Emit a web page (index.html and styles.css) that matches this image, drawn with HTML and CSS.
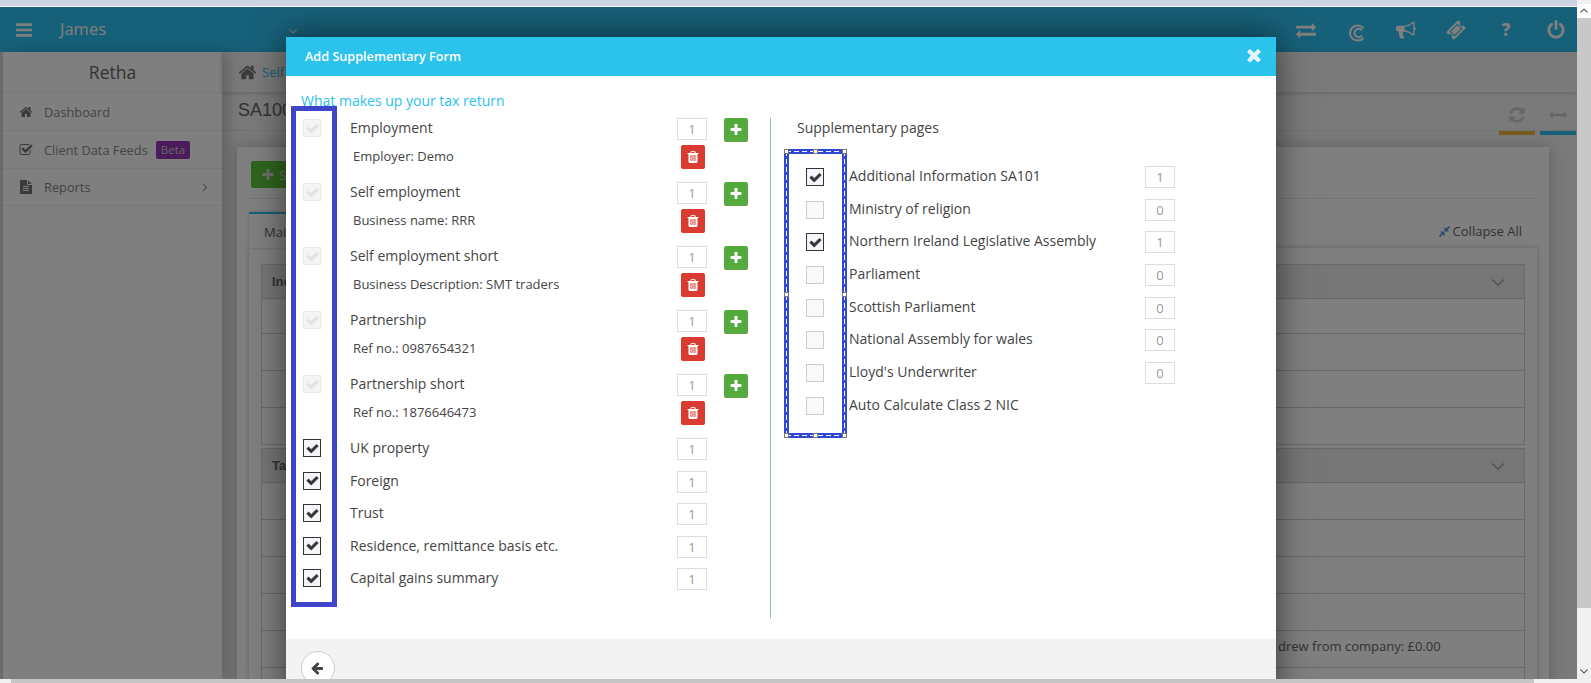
FILE: index.html
```html
<!DOCTYPE html>
<html lang="en">
<head>
<meta charset="utf-8">
<title>Add Supplementary Form</title>
<link rel="stylesheet" href="styles.css">
</head>
<body>
<svg class="sprite" aria-hidden="true">
  <symbol id="i-check" viewBox="0 0 1792 1792"><path d="M1671 566q0 40-28 68l-724 724-136 136q-28 28-68 28t-68-28l-136-136-362-362q-28-28-28-68t28-68l136-136q28-28 68-28t68 28l294 295 656-657q28-28 68-28t68 28l136 136q28 28 28 68z"/></symbol>
  <symbol id="i-plus" viewBox="0 0 1792 1792"><path d="M1600 736v192q0 40-28 68t-68 28h-416v416q0 40-28 68t-68 28h-192q-40 0-68-28t-28-68v-416h-416q-40 0-68-28t-28-68v-192q0-40 28-68t68-28h416v-416q0-40 28-68t68-28h192q40 0 68 28t28 68v416h416q40 0 68 28t28 68z"/></symbol>
  <symbol id="i-times" viewBox="0 0 1792 1792"><path d="M1490 1322q0 40-28 68l-136 136q-28 28-68 28t-68-28l-294-294-294 294q-28 28-68 28t-68-28l-136-136q-28-28-28-68t28-68l294-294-294-294q-28-28-28-68t28-68l136-136q28-28 68-28t68 28l294 294 294-294q28-28 68-28t68 28l136 136q28 28 28 68t-28 68l-294 294 294 294q28 28 28 68z"/></symbol>
  <symbol id="i-trash" viewBox="0 0 1792 1792"><path d="M704 1376v-704q0-14-9-23t-23-9h-64q-14 0-23 9t-9 23v704q0 14 9 23t23 9h64q14 0 23-9t9-23zm256 0v-704q0-14-9-23t-23-9h-64q-14 0-23 9t-9 23v704q0 14 9 23t23 9h64q14 0 23-9t9-23zm256 0v-704q0-14-9-23t-23-9h-64q-14 0-23 9t-9 23v704q0 14 9 23t23 9h64q14 0 23-9t9-23zm-544-992h448l-48-117q-7-9-17-11h-317q-10 2-17 11zm928 32v64q0 14-9 23t-23 9h-96v948q0 83-47 143.5t-113 60.5h-832q-66 0-113-58.5t-47-141.5v-952h-96q-14 0-23-9t-9-23v-64q0-14 9-23t23-9h309l70-167q15-37 54-63t79-26h320q40 0 79 26t54 63l70 167h309q14 0 23 9t9 23z"/></symbol>
  <symbol id="i-home" viewBox="0 0 1792 1792"><path d="M1472 992v480q0 26-19 45t-45 19h-384v-384h-256v384h-384q-26 0-45-19t-19-45v-480q0-1 .5-3t.5-3l575-474 575 474q1 2 1 6zm223-69l-62 74q-8 9-21 11h-3q-13 0-21-7l-692-577-692 577q-12 8-24 7-13-2-21-11l-62-74q-8-10-7-23.5t11-21.5l719-599q32-26 76-26t76 26l244 204v-195q0-14 9-23t23-9h192q14 0 23 9t9 23v408l219 182q10 8 11 21.5t-7 23.5z"/></symbol>
  <symbol id="i-back" viewBox="0 0 1792 1792"><path d="M1536 896v128q0 53-32.5 90.5t-84.5 37.5h-704l293 294q38 36 38 90t-38 90l-75 76q-37 37-90 37-52 0-91-37l-651-652q-37-37-37-90 0-52 37-91l651-650q38-38 91-38 52 0 90 38l75 74q38 38 38 91t-38 91l-293 293h704q52 0 84.5 37.5t32.5 90.5z"/></symbol>
  <symbol id="i-power" viewBox="0 0 1792 1792"><path d="M1664 896q0 156-61 298t-164 245-245 164-298 61-298-61-245-164-164-245-61-298q0-182 80.5-343t226.5-270q43-32 95.5-25t83.5 50q32 42 24.5 94.5t-49.5 84.5q-98 74-151.5 181t-53.5 228q0 104 40.5 198.5t109.5 163.5 163.5 109.5 198.5 40.5 198.5-40.5 163.5-109.5 109.5-163.5 40.5-198.5q0-121-53.5-228t-151.5-181q-42-32-49.5-84.5t24.5-94.5q31-43 84-50t95 25q146 109 226.5 270t80.5 343zm-640-768v640q0 52-38 90t-90 38-90-38-38-90v-640q0-52 38-90t90-38 90 38 38 90z"/></symbol>
  <symbol id="i-exchange" viewBox="0 0 1792 1792"><path d="M1792 1184v192q0 13-9.5 22.5t-22.5 9.5h-1376v192q0 13-9.5 22.5t-22.5 9.5q-12 0-24-10l-319-320q-9-9-9-22 0-14 9-23l320-320q9-9 23-9 13 0 22.5 9.5t9.5 22.5v192h1376q13 0 22.5 9.5t9.5 22.5zm0-544q0 14-9 23l-320 320q-9 9-23 9-13 0-22.5-9.5t-9.5-22.5v-192h-1376q-13 0-22.5-9.5t-9.5-22.5v-192q0-13 9.5-22.5t22.5-9.5h1376v-192q0-14 9-23t23-9q12 0 24 10l319 319q9 9 9 23z"/></symbol>
  <symbol id="i-bullhorn" viewBox="0 0 1792 1792"><path d="M1664 640q53 0 90.5 37.5t37.5 90.5-37.5 90.5-90.5 37.5v384q0 52-38 90t-90 38q-417-347-812-380-58 19-91 66t-31 100.5 40 92.5q-20 33-23 65.5t6 58 33.5 55 48 50 61.5 50.5q-29 58-111.5 83t-168.5 11.5-132-55.5q-7-23-29.5-87.5t-32-94.5-23-89-15-101 3.5-98.5 22-110.5h-122q-66 0-113-47t-47-113v-192q0-66 47-113t113-47h480q435 0 896-384 52 0 90 38t38 90v384zm-128 604v-954q-394 302-768 343v270q377 42 768 341z"/></symbol>
  <symbol id="i-ticket" viewBox="0 0 1792 1792"><path d="M1024 452l316 316-572 572-316-316zm-211 979l618-618q19-19 19-45t-19-45l-362-362q-18-18-45-18t-45 18l-618 618q-19 19-19 45t19 45l362 362q18 18 45 18t45-18zm889-637l-907 908q-37 37-90.5 37t-90.5-37l-126-126q56-56 56-136t-56-136-136-56-136 56l-125-126q-37-37-37-90.5t37-90.5l907-906q37-37 90.5-37t90.5 37l125 125q-56 56-56 136t56 136 136 56 136-56l126 125q37 37 37 90.5t-37 90.5z"/></symbol>
  <symbol id="i-refresh" viewBox="0 0 1792 1792"><path d="M1639 1056q0 5-1 7-64 268-268 434.5t-478 166.5q-146 0-282.5-55t-243.5-157l-129 129q-19 19-45 19t-45-19-19-45v-448q0-26 19-45t45-19h448q26 0 45 19t19 45-19 45l-137 137q71 66 161 102t187 36q134 0 250-65t186-179q11-17 53-117 8-23 30-23h192q13 0 22.5 9.5t9.5 22.5zm25-800v448q0 26-19 45t-45 19h-448q-26 0-45-19t-19-45 19-45l138-138q-148-137-349-137-134 0-250 65t-186 179q-11 17-53 117-8 23-30 23h-199q-13 0-22.5-9.5t-9.5-22.5v-7q65-268 270-434.5t480-166.5q146 0 284 55.5t245 156.5l130-129q19-19 45-19t45 19 19 45z"/></symbol>
  <symbol id="i-arrows-h" viewBox="0 0 1792 1792"><path d="M1792 896q0 26-19 45l-256 256q-19 19-45 19t-45-19-19-45v-128h-1024v128q0 26-19 45t-45 19-45-19l-256-256q-19-19-19-45t19-45l256-256q19-19 45-19t45 19 19 45v128h1024v-128q0-26 19-45t45-19 45 19l256 256q19 19 19 45z"/></symbol>
  <symbol id="i-compress" viewBox="0 0 1792 1792"><path d="M896 960v448q0 26-19 45t-45 19-45-19l-144-144-332 332q-10 10-23 10t-23-10l-114-114q-10-10-10-23t10-23l332-332-144-144q-19-19-19-45t19-45 45-19h448q26 0 45 19t19 45zm755-672q0 13-10 23l-332 332 144 144q19 19 19 45t-19 45-45 19h-448q-26 0-45-19t-19-45v-448q0-26 19-45t45-19 45 19l144 144 332-332q10-10 23-10t23 10l114 114q10 10 10 23z"/></symbol>
  <symbol id="i-file" viewBox="0 0 1792 1792"><path d="M1596 476q14 14 28 36h-472v-472q22 14 36 28zm-476 164h544v1056q0 40-28 68t-68 28h-1344q-40 0-68-28t-28-68v-1600q0-40 28-68t68-28h800v544q0 40 28 68t68 28zm160 736v-64q0-14-9-23t-23-9h-704q-14 0-23 9t-9 23v64q0 14 9 23t23 9h704q14 0 23-9t9-23zm0-256v-64q0-14-9-23t-23-9h-704q-14 0-23 9t-9 23v64q0 14 9 23t23 9h704q14 0 23-9t9-23zm0-256v-64q0-14-9-23t-23-9h-704q-14 0-23 9t-9 23v64q0 14 9 23t23 9h704q14 0 23-9t9-23z"/></symbol>
  <symbol id="i-check-square" viewBox="0 0 1792 1792"><path d="M1472 930v318q0 119-84.5 203.5t-203.5 84.5h-832q-119 0-203.5-84.5t-84.5-203.5v-832q0-119 84.5-203.5t203.5-84.5h832q63 0 117 25 15 7 18 23 3 17-9 29l-49 49q-10 10-23 10-3 0-9-2-23-6-45-6h-832q-66 0-113 47t-47 113v832q0 66 47 113t113 47h832q66 0 113-47t47-113v-254q0-13 9-22l64-64q10-10 23-10 6 0 12 3 20 8 20 29zm231-489l-814 814q-24 24-57 24t-57-24l-430-430q-24-24-24-57t24-57l110-110q24-24 57-24t57 24l263 263 647-647q24-24 57-24t57 24l110 110q24 24 24 57t-24 57z"/></symbol>
  <symbol id="i-angle-right" viewBox="0 0 1792 1792"><path d="M1171 960q0 13-10 23l-466 466q-10 10-23 10t-23-10l-50-50q-10-10-10-23t10-23l393-393-393-393q-10-10-10-23t10-23l50-50q10-10 23-10t23 10l466 466q10 10 10 23z"/></symbol>
  <symbol id="i-angle-down" viewBox="0 0 1792 1792"><path d="M1395 736q0 13-10 23l-466 466q-10 10-23 10t-23-10l-466-466q-10-10-10-23t10-23l50-50q10-10 23-10t23 10l393 393 393-393q10-10 23-10t23 10l50 50q10 10 10 23z"/></symbol>
  <symbol id="i-bars" viewBox="0 0 1536 1280"><path d="M1536 1088v128q0 26-19 45t-45 19h-1408q-26 0-45-19t-19-45v-128q0-26 19-45t45-19h1408q26 0 45 19t19 45zm0-512v128q0 26-19 45t-45 19h-1408q-26 0-45-19t-19-45v-128q0-26 19-45t45-19h1408q26 0 45 19t19 45zm0-512v128q0 26-19 45t-45 19h-1408q-26 0-45-19t-19-45v-128q0-26 19-45t45-19h1408q26 0 45 19t19 45z"/></symbol>
  <symbol id="i-credit" viewBox="0 0 20 20"><path d="M15.5 5.2A7.6 7.6 0 1 0 15.5 14.8" fill="none" stroke="currentColor" stroke-width="2"/><path d="M14 7.4A4.2 4.2 0 1 0 14 12.6" fill="none" stroke="currentColor" stroke-width="2"/></symbol>
</svg>

<div class="window">
  <div class="browser-area">
    <div class="strip"></div>
    <div class="viewport">
      <header class="topbar">
        <svg class="ic-bars"><use href="#i-bars"/></svg>
        <span class="brand">James</span>
        <svg class="ic-caret"><use href="#i-angle-down"/></svg>
        <nav class="top-icons">
          <svg class="ic-top"><use href="#i-exchange"/></svg>
          <svg class="ic-top ic-credit"><use href="#i-credit"/></svg>
          <svg class="ic-top"><use href="#i-bullhorn"/></svg>
          <svg class="ic-top"><use href="#i-ticket"/></svg>
          <span class="ic-top ic-help">?</span>
          <svg class="ic-top"><use href="#i-power"/></svg>
        </nav>
      </header>

      <div class="layout">
        <aside class="sidebar">
          <div class="side-user">Retha</div>
          <a class="side-item"><svg class="side-ic"><use href="#i-home"/></svg>Dashboard</a>
          <a class="side-item"><svg class="side-ic"><use href="#i-check-square"/></svg>Client Data Feeds<span class="badge">Beta</span></a>
          <a class="side-item"><svg class="side-ic"><use href="#i-file"/></svg>Reports<svg class="side-more"><use href="#i-angle-right"/></svg></a>
        </aside>

        <main class="main">
          <div class="crumbs"><svg class="crumb-home"><use href="#i-home"/></svg><a class="crumb-link">Self</a></div>
          <div class="titlebar">
            <h1 class="page-title">SA100</h1>
            <div class="stat stat-amber"><svg class="stat-ic"><use href="#i-refresh"/></svg></div>
            <div class="stat stat-teal"><svg class="stat-ic"><use href="#i-arrows-h"/></svg></div>
          </div>
          <section class="card">
            <button class="btn-add"><svg class="btn-ic"><use href="#i-plus"/></svg>Supplementary</button>
            <div class="tabs">
              <div class="tab">Main</div>
              <a class="collapse"><svg class="collapse-ic"><use href="#i-compress"/></svg>Collapse All</a>
            </div>
            <div class="tab-panel">
              <div class="acc">
                <div class="acc-head">Income<svg class="acc-chev"><use href="#i-angle-down"/></svg></div>
                <div class="acc-row acc-row-first"></div>
                <div class="acc-row"></div>
                <div class="acc-row"></div>
                <div class="acc-row"></div>
              </div>
              <div class="acc">
                <div class="acc-head">Tax<svg class="acc-chev"><use href="#i-angle-down"/></svg></div>
                <div class="acc-row"></div>
                <div class="acc-row"></div>
                <div class="acc-row"></div>
                <div class="acc-row"></div>
                <div class="acc-row acc-note">drew from company: £0.00</div>
                <div class="acc-row acc-note acc-note-next">for the</div>
              </div>
            </div>
          </section>
        </main>
      </div>

      <div class="backdrop"></div>

      <div class="modal">
        <div class="modal-head">
          <span class="modal-title">Add Supplementary Form</span>
          <svg class="modal-close"><use href="#i-times"/></svg>
        </div>
        <div class="modal-body">
          <div class="col-main">
            <a class="section-link">What makes up your tax return</a>
            <div class="form-grid">
              <span class="cb cb-locked"><svg class="cb-tick"><use href="#i-check"/></svg></span>
              <span class="lbl">Employment</span>
              <input class="num" value="1" readonly>
              <span class="btn-sq btn-green"><svg class="sq-ic"><use href="#i-plus"/></svg></span>
              <span class="sub">Employer: Demo</span>
              <span class="btn-sq btn-red"><svg class="sq-ic"><use href="#i-trash"/></svg></span>

              <span class="cb cb-locked"><svg class="cb-tick"><use href="#i-check"/></svg></span>
              <span class="lbl">Self employment</span>
              <input class="num" value="1" readonly>
              <span class="btn-sq btn-green"><svg class="sq-ic"><use href="#i-plus"/></svg></span>
              <span class="sub">Business name: RRR</span>
              <span class="btn-sq btn-red"><svg class="sq-ic"><use href="#i-trash"/></svg></span>

              <span class="cb cb-locked"><svg class="cb-tick"><use href="#i-check"/></svg></span>
              <span class="lbl">Self employment short</span>
              <input class="num" value="1" readonly>
              <span class="btn-sq btn-green"><svg class="sq-ic"><use href="#i-plus"/></svg></span>
              <span class="sub">Business Description: SMT traders</span>
              <span class="btn-sq btn-red"><svg class="sq-ic"><use href="#i-trash"/></svg></span>

              <span class="cb cb-locked"><svg class="cb-tick"><use href="#i-check"/></svg></span>
              <span class="lbl">Partnership</span>
              <input class="num" value="1" readonly>
              <span class="btn-sq btn-green"><svg class="sq-ic"><use href="#i-plus"/></svg></span>
              <span class="sub">Ref no.: 0987654321</span>
              <span class="btn-sq btn-red"><svg class="sq-ic"><use href="#i-trash"/></svg></span>

              <span class="cb cb-locked"><svg class="cb-tick"><use href="#i-check"/></svg></span>
              <span class="lbl">Partnership short</span>
              <input class="num" value="1" readonly>
              <span class="btn-sq btn-green"><svg class="sq-ic"><use href="#i-plus"/></svg></span>
              <span class="sub">Ref no.: 1876646473</span>
              <span class="btn-sq btn-red"><svg class="sq-ic"><use href="#i-trash"/></svg></span>

              <span class="cb cb-on"><svg class="cb-tick"><use href="#i-check"/></svg></span>
              <span class="lbl">UK property</span>
              <input class="num" value="1" readonly>

              <span class="cb cb-on"><svg class="cb-tick"><use href="#i-check"/></svg></span>
              <span class="lbl">Foreign</span>
              <input class="num" value="1" readonly>

              <span class="cb cb-on"><svg class="cb-tick"><use href="#i-check"/></svg></span>
              <span class="lbl">Trust</span>
              <input class="num" value="1" readonly>

              <span class="cb cb-on"><svg class="cb-tick"><use href="#i-check"/></svg></span>
              <span class="lbl">Residence, remittance basis etc.</span>
              <input class="num" value="1" readonly>

              <span class="cb cb-on"><svg class="cb-tick"><use href="#i-check"/></svg></span>
              <span class="lbl">Capital gains summary</span>
              <input class="num" value="1" readonly>
            </div>
          </div>

          <div class="col-side">
            <div class="side-title">Supplementary pages</div>
            <div class="supp-grid">
              <span class="cb cb-on"><svg class="cb-tick"><use href="#i-check"/></svg></span>
              <span class="supp-lbl">Additional Information SA101</span>
              <input class="num" value="1" readonly>
              <span class="cb cb-off"></span>
              <span class="supp-lbl">Ministry of religion</span>
              <input class="num" value="0" readonly>
              <span class="cb cb-on"><svg class="cb-tick"><use href="#i-check"/></svg></span>
              <span class="supp-lbl">Northern Ireland Legislative Assembly</span>
              <input class="num" value="1" readonly>
              <span class="cb cb-off"></span>
              <span class="supp-lbl">Parliament</span>
              <input class="num" value="0" readonly>
              <span class="cb cb-off"></span>
              <span class="supp-lbl">Scottish Parliament</span>
              <input class="num" value="0" readonly>
              <span class="cb cb-off"></span>
              <span class="supp-lbl">National Assembly for wales</span>
              <input class="num" value="0" readonly>
              <span class="cb cb-off"></span>
              <span class="supp-lbl">Lloyd's Underwriter</span>
              <input class="num" value="0" readonly>
              <span class="cb cb-off"></span>
              <span class="supp-lbl">Auto Calculate Class 2 NIC</span>
            </div>
          </div>
        </div>
        <div class="modal-foot">
          <span class="btn-back"><svg class="back-ic"><use href="#i-back"/></svg></span>
        </div>

        <div class="mark-box"></div>
        <div class="mark-select">
          <i class="h h-tl"></i><i class="h h-tc"></i><i class="h h-tr"></i>
          <i class="h h-ml"></i><i class="h h-mr"></i>
          <i class="h h-bl"></i><i class="h h-bc"></i><i class="h h-br"></i>
        </div>
      </div>
    </div>
  </div>

  <div class="vscroll">
    <span class="vs-up"><svg class="vs-ic"><use href="#i-angle-down"/></svg></span>
    <span class="vs-thumb"></span>
    <svg class="vs-ic vs-down"><use href="#i-angle-down"/></svg>
  </div>
  <div class="hscroll"><span class="hs-thumb"></span></div>
</div>
</body>
</html>
```

FILE: styles.css
```css
* { box-sizing: border-box; }
html, body { margin: 0; height: 100%; overflow: hidden; }
body { font-family: "Open Sans", "Liberation Sans", sans-serif; font-size: 14px; color: #666; background: #fff; }
svg { fill: currentColor; display: block; flex: none; }
a { text-decoration: none; }
.sprite { width: 0; height: 0; position: absolute; }

/* window */
.window { display: grid; grid-template-columns: 1577px 14px; grid-template-rows: 679px 4px; width: 1591px; height: 683px; }
.browser-area { display: flex; flex-direction: column; min-height: 0; }
.strip { height: 7px; background: #ccd4e3; border-bottom: 1px solid #fff; flex: none; }
.viewport { position: relative; flex: 1; overflow: hidden; background: #f4f4f4; display: flex; flex-direction: column; }
.vscroll { background: #f1f1f1; display: flex; flex-direction: column; position: relative; }
.vs-up { height: 14px; margin-top: 4px; background: #fff; display: flex; align-items: center; justify-content: center; flex: none; color: #505050; }
.vs-up .vs-ic { transform: rotate(180deg); }
.vs-ic { width: 14px; height: 14px; color: #505050; }
.vs-thumb { height: 590px; background: #c8c8c8; flex: none; }
.vs-down { margin-top: 56px; }
.hscroll { grid-column: 1 / -1; background: #f1f1f1; padding-left: 11px; }
.hs-thumb { display: block; width: 1523px; height: 100%; background: #c6c6c6; }

/* topbar */
.topbar { height: 45px; flex: none; background: #2ec0f2; color: #fff; display: flex; align-items: center; }
.ic-bars { width: 16px; height: 14px; margin-left: 16px; }
.brand { font-size: 16.5px; margin: -2px 0 0 28px; width: 226px; }
.ic-caret { width: 14px; height: 14px; margin-top: 3px; }
.top-icons { margin-left: auto; display: flex; align-items: center; margin-right: 11px; gap: 30px; }
.ic-top { width: 20px; height: 20px; display: block; }
.ic-credit { margin: 6px -2px 0 2px; }
.ic-help { font-weight: 800; font-size: 17px; line-height: 20px; text-align: center; }

/* sidebar */
.layout { flex: 1; display: flex; min-height: 0; padding-left: 3px; background: #dcdcdc; }
.sidebar { width: 219px; flex: none; background: #fff; box-shadow: 6px 0 14px rgba(0,0,0,.2); position: relative; color: #777; }
.side-user { height: 41px; line-height: 40px; text-align: center; font-size: 17.5px; color: #666; border-bottom: 1px solid #eee; }
.side-item { height: 38px; padding-left: 16px; display: flex; align-items: center; font-size: 12.8px; color: #888; border-bottom: 1px solid #eee; }
.side-item:last-child { height: 37px; }
.side-ic { width: 14px; height: 14px; margin-right: 11px; color: #777; }
.badge { background: #9636b8; color: #ccc; font-size: 11.5px; line-height: 18px; padding: 0 5px; border-radius: 2px; margin-left: 8px; }
.side-more { width: 14px; height: 14px; margin-left: auto; margin-right: 10px; color: #999; }

/* main */
.main { flex: 1; min-width: 0; background: #f4f4f4; }
.crumbs { height: 40px; display: flex; align-items: center; padding-left: 16px; box-shadow: 0 1px 5px rgba(0,0,0,.18); position: relative; }
.crumb-home { width: 19px; height: 19px; color: #777; }
.crumb-link { margin-left: 5px; color: #2ec0f2; font-size: 13px; }
.titlebar { height: 39px; display: flex; align-items: flex-start; padding-right: 1px; border-bottom: 1px solid #e2e2e2; }
.page-title { margin: 0 auto 0 16px; font: 400 18px/36px "Liberation Sans", sans-serif; color: #666; }
.stat { width: 36px; height: 43px; border-bottom: 4px solid; color: #ccc; display: flex; align-items: center; justify-content: center; margin-left: 5px; padding-top: 6px; }
.stat-amber { border-color: #eab63c; }
.stat-teal { border-color: #2ec0f2; }
.stat-ic { width: 18px; height: 18px; }

.card { margin: 16px 28px 0 15px; background: #fff; box-shadow: 0 0 14px rgba(0,0,0,.22); padding: 14px 12px 0; height: 600px; }
.btn-add { display: flex; align-items: center; height: 27px; padding: 0 12px 0 10px; margin-left: 2px; background: #5fc83c; border: 0; border-radius: 2px; color: #ddd; font: 13px "Open Sans", sans-serif; }
.btn-ic { width: 14px; height: 14px; margin-right: 4px; }
.tabs { margin-top: 10px; border-top: 1px solid #e8e8e8; padding-top: 13px; height: 50px; display: flex; justify-content: space-between; align-items: stretch; }
.tab { width: 90px; border-top: 2px solid #2ec0f2; background: #fff; box-shadow: 0 0 3px rgba(0,0,0,.2); padding: 9px 0 0 15px; font-size: 13px; color: #666; }
.collapse { display: flex; align-items: center; gap: 2px; font-size: 13px; color: #666; padding: 2px 15px 0 0; }
.collapse-ic { width: 13px; height: 13px; color: #5a94d8; }
.tab-panel { background: #fff; box-shadow: 0 0 5px rgba(0,0,0,.25); padding: 16px 12px; }
.acc { border: 1px solid #d4d4d4; margin-bottom: 3px; }
.acc-head { height: 33px; padding-left: 10px; background: #ededed; font: 700 13px/33px "Liberation Sans", sans-serif; color: #666; display: flex; justify-content: space-between; align-items: center; }
.acc-chev { width: 22px; height: 22px; margin-right: 15px; color: #aaa; }
.acc-row { height: 37px; border-top: 1px solid #d0d0d0; }
.acc-row-first { height: 35px; }
.acc-note { padding-left: 1016px; line-height: 30px; font-size: 13px; color: #666; white-space: nowrap; }
.acc-note-next { padding-left: 1066px; line-height: 36px; }

/* overlay + modal */
.backdrop { position: absolute; inset: 0; background: rgba(0,0,0,.5); }
.modal { position: absolute; left: 286px; top: 30px; width: 990px; background: #fff; box-shadow: 0 0 32px rgba(0,0,0,.55); }
.modal-head { height: 39px; background: #2bc2ec; color: #fff; display: flex; align-items: center; justify-content: space-between; padding: 0 12px 0 19px; }
.modal-title { font-size: 12.65px; font-weight: 600; margin-top: -2px; }
.modal-close { width: 20px; height: 20px; margin-top: -4px; color: #e2f7fd; }
.modal-body { height: 563px; display: flex; color: #444; }
.col-main { width: 484px; flex: none; padding: 15px 0 0 17px; }
.section-link { display: block; margin-left: -2px; height: 21px; line-height: 20px; color: #2bc2ec; font-size: 14px; }
.form-grid { display: grid; grid-template-columns: 47px 327px 47px 24px; grid-template-rows: repeat(10, 32px) repeat(5, 32.5px); }
.form-grid .cb { grid-column: 1; }
.lbl { line-height: 32px; font-size: 14px; }
.cb { width: 18px; height: 18px; border: 1px solid #ccc; background: #f9f9f9; display: flex; align-items: center; justify-content: center; margin-top: 7px; }
.cb-tick { width: 13px; height: 13px; stroke: currentColor; stroke-width: 70px; }
.cb-locked { background: #f4f4f4; border-color: #e8e8e8; color: #e2e2e2; }
.cb-on { background: #f4f6fb; border-color: #333; color: #333; }
.num { width: 30px; height: 22px; margin: 6px 0 0; padding: 0; border: 1px solid #ddd; background: #fff; text-align: center; font: 13px "Open Sans", sans-serif; color: #999; outline: 0; }
.btn-sq { width: 24px; height: 24px; border-radius: 2px; display: flex; align-items: center; justify-content: center; color: #fff; margin-top: 6px; }
.btn-green { background: #54a93f; }
.btn-red { background: #db3a30; grid-column: 3; margin: 1px 0 0 4px; }
.sq-ic { width: 14px; height: 14px; }
.sub { grid-column: 2; font-size: 13px; line-height: 24px; margin-left: 3px; }

.col-side { margin-top: 42px; height: 500px; border-left: 1px solid #7dc6c8; padding-left: 26px; }
.side-title { line-height: 20px; font-size: 14px; }
.supp-grid { margin: 30px 0 0 9px; display: grid; grid-template-columns: 43px 296px 30px; grid-auto-rows: 32.7px; }
.supp-lbl { font-size: 14px; line-height: 15px; }
.supp-grid .cb { margin-top: 0; grid-column: 1; }
.supp-grid .num { margin-top: -2px; }

.modal-foot { height: 60px; background: #f3f3f3; padding: 12px 15px; }
.btn-back { display: flex; width: 34px; height: 34px; border: 1px solid #ccc; border-radius: 50%; background: #fff; align-items: center; justify-content: center; color: #444; }
.back-ic { width: 14px; height: 14px; }

/* annotations drawn over the screenshot */
.mark-box { position: absolute; left: 5px; top: 69px; width: 46px; height: 501px; border: 5px solid #4044c8; }
.mark-select { position: absolute; left: 498px; top: 112px; width: 63px; height: 289px; border: 5px solid #3049d4; }
.mark-select::before {
  content: ""; position: absolute; inset: -3px;
  background:
    repeating-linear-gradient(90deg, #fff 0 5px, transparent 5px 8px) top / 100% 1px no-repeat,
    repeating-linear-gradient(90deg, #fff 0 5px, transparent 5px 8px) bottom / 100% 1px no-repeat,
    repeating-linear-gradient(0deg, #fff 0 5px, transparent 5px 8px) left / 1px 100% no-repeat,
    repeating-linear-gradient(0deg, #fff 0 5px, transparent 5px 8px) right / 1px 100% no-repeat;
}
.h { position: absolute; width: 5px; height: 5px; background: #fff; border: 1px solid #777; }
.h-tl { left: -5px; top: -5px; }
.h-tc { left: 24px; top: -5px; }
.h-tr { right: -5px; top: -5px; }
.h-ml { left: -5px; top: 138px; }
.h-mr { right: -5px; top: 138px; }
.h-bl { left: -5px; bottom: -5px; }
.h-bc { left: 24px; bottom: -5px; }
.h-br { right: -5px; bottom: -5px; }
```
